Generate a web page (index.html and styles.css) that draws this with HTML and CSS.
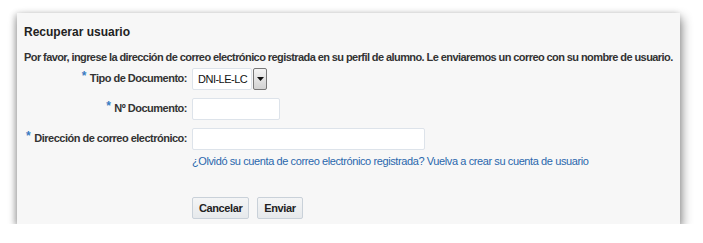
FILE: index.html
```html
<!DOCTYPE html>
<html lang="es">
<head>
    <meta charset="UTF-8">
    <title>Recuperar usuario</title>
    <link rel="stylesheet" href="styles.css">
</head>
<body>
    <div class="panel">
        <h1>Recuperar usuario</h1>
        <p class="intro">Por favor, ingrese la dirección de correo electrónico registrada en su perfil de alumno. Le enviaremos un correo con su nombre de usuario.</p>

        <div class="form">
            <label class="lbl"><span class="req">*</span>Tipo de Documento:</label>
            <div class="field">
                <span class="select">
                    <span class="select-value">DNI-LE-LC</span>
                    <span class="select-btn">
                        <svg width="7" height="4" viewBox="0 0 7 4"><path d="M0 0h7L3.5 4z" fill="#111"/></svg>
                    </span>
                </span>
            </div>

            <label class="lbl"><span class="req">*</span>Nº Documento:</label>
            <div class="field"><input type="text" class="input short"></div>

            <label class="lbl"><span class="req">*</span>Dirección de correo electrónico:</label>
            <div class="field"><input type="text" class="input long"></div>

            <span></span>
            <div class="field link-row"><a href="#" class="link">¿Olvidó su cuenta de correo electrónico registrada? Vuelva a crear su cuenta de usuario</a></div>

            <span></span>
            <div class="buttons">
                <button class="btn">Cancelar</button>
                <button class="btn">Enviar</button>
            </div>
        </div>
    </div>
</body>
</html>
```

FILE: styles.css
```css
* {
    margin: 0;
    padding: 0;
    box-sizing: border-box;
}

body {
    font-family: "Liberation Sans", Arial, sans-serif;
    font-size: 11px;
    color: #333;
    background-color: #fff;
}

.panel {
    margin: 13px 0 0 17px;
    width: 663px;
    height: 211px;
    padding: 11px 7px 0 7px;
    background-color: #f7f7f7;
    box-shadow: 2px 5px 10px rgba(0, 0, 0, 0.45), -2px 1px 6px rgba(0, 0, 0, 0.2);
}

h1 {
    font-size: 12px;
    font-weight: bold;
    color: #222;
    line-height: 16px;
}

.intro {
    margin-top: 10px;
    font-weight: bold;
    line-height: 15px;
    letter-spacing: -0.58px;
    white-space: nowrap;
    color: #333;
}

.form {
    display: grid;
    grid-template-columns: 163px auto;
    column-gap: 5px;
    row-gap: 8px;
    align-items: center;
    margin-top: 3px;
}

.lbl {
    text-align: right;
    font-weight: bold;
    letter-spacing: -0.5px;
    white-space: nowrap;
    color: #333;
}

.req {
    color: #3a7cc2;
    font-size: 12px;
    vertical-align: top;
    position: relative;
    top: -3px;
    margin-right: 4px;
}

.field {
    display: flex;
    align-items: center;
}

.select {
    display: flex;
    align-items: center;
    height: 22px;
}

.select-value {
    display: block;
    width: 60px;
    height: 22px;
    line-height: 20px;
    padding-left: 5px;
    background: #fff;
    border: 1px solid #dde3ea;
    border-radius: 2px;
    color: #111;
    letter-spacing: -0.5px;
}

.select-btn {
    display: flex;
    align-items: center;
    justify-content: center;
    width: 14px;
    height: 22px;
    margin-left: 1px;
    background: linear-gradient(#f4f4f4, #d2d2d2);
    border: 1px solid #777;
    border-radius: 2px;
}

.input {
    height: 22px;
    background: #fff;
    border: 1px solid #dde3ea;
    border-radius: 2px;
}

.short {
    width: 88px;
}

.long {
    width: 233px;
}

.link-row {
    margin-top: -4px;
}

.link {
    color: #2a67ad;
    text-decoration: none;
    line-height: 15px;
    letter-spacing: -0.4px;
    white-space: nowrap;
}

.buttons {
    display: flex;
    gap: 8px;
    margin-top: 20px;
}

.btn {
    font-family: "Liberation Sans", Arial, sans-serif;
    font-size: 11px;
    font-weight: bold;
    letter-spacing: -0.4px;
    color: #222;
    height: 22px;
    padding: 0 6px;
    background: linear-gradient(#f4f5f6, #e6e9ec);
    border: 1px solid #c9d1d9;
    border-radius: 2px;
}
```
